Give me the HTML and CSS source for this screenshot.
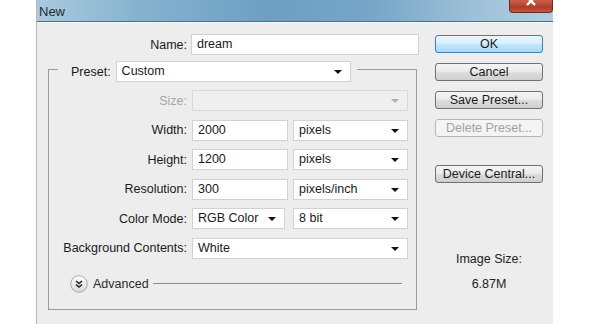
FILE: index.html
```html
<!DOCTYPE html>
<html lang="en">
  <head>
    <meta charset="UTF-8" />
    <title>New</title>
    <link rel="stylesheet" href="styles.css">
  </head>
  <body>
    <div class="dialog">
      <div class="titlebar">
        <span class="title">New</span>
        <span class="close">
          <svg width="14" height="10" viewBox="0 0 14 10">
            <path d="M3 -3 L11 5 M11 -3 L3 5" stroke="#ffffff" stroke-width="2.4" fill="none" />
          </svg>
        </span>
      </div>

      <div class="content">
        <div class="main">
          <div class="name-row">
            <label class="label">Name:</label>
            <div class="field name-field">dream</div>
          </div>

          <fieldset class="group">
            <legend class="legend">
              <span class="legend-label">Preset:</span>
              <span class="field select preset-select">Custom</span>
            </legend>

            <div class="rows">
              <span class="label disabled">Size:</span>
              <span class="field select wide disabled-field"></span>

              <span class="label">Width:</span>
              <div class="pair">
                <span class="field num">2000</span>
                <span class="field select unit">pixels</span>
              </div>

              <span class="label">Height:</span>
              <div class="pair">
                <span class="field num">1200</span>
                <span class="field select unit">pixels</span>
              </div>

              <span class="label">Resolution:</span>
              <div class="pair">
                <span class="field num">300</span>
                <span class="field select unit">pixels/inch</span>
              </div>

              <span class="label">Color Mode:</span>
              <div class="pair">
                <span class="field select mode">RGB Color</span>
                <span class="field select unit">8 bit</span>
              </div>

              <span class="label">Background Contents:</span>
              <span class="field select wide">White</span>
            </div>

            <div class="advanced">
              <svg class="adv-icon" width="18" height="18" viewBox="0 0 18 18">
                <defs>
                  <linearGradient id="advg" x1="0" y1="0" x2="0" y2="1">
                    <stop offset="0" stop-color="#ffffff" />
                    <stop offset="1" stop-color="#d8d8d8" />
                  </linearGradient>
                </defs>
                <circle cx="9" cy="9" r="8.3" fill="url(#advg)" stroke="#a8a8a8" stroke-width="1" />
                <path d="M6 6 L9 8.5 L12 6 M6 9.5 L9 12 L12 9.5" fill="none" stroke="#222" stroke-width="1.6" />
              </svg>
              <span class="adv-text">Advanced</span>
              <span class="adv-line"></span>
            </div>
          </fieldset>
        </div>

        <div class="side">
          <button class="btn default">OK</button>
          <button class="btn">Cancel</button>
          <button class="btn">Save Preset...</button>
          <button class="btn" disabled>Delete Preset...</button>
          <button class="btn device">Device Central...</button>

          <div class="image-size">
            <div>Image Size:</div>
            <div class="size-value">6.87M</div>
          </div>
        </div>
      </div>
    </div>
  </body>
</html>
```

FILE: styles.css
```css
* {
  margin: 0;
  padding: 0;
  box-sizing: border-box;
}

body {
  background-color: #ffffff;
  font-family: "Liberation Sans", Arial, sans-serif;
  font-size: 12.5px;
  color: #1a1a1a;
}

.dialog {
  margin-left: 36px;
  width: 517px;
  height: 324px;
  background-color: #ededed;
  border-left: 1px solid #b8b8b8;
  overflow: hidden;
}

/* Title bar */
.titlebar {
  height: 22px;
  display: flex;
  justify-content: space-between;
  align-items: flex-start;
  background: linear-gradient(90deg, #a9cade 0%, #86b2cf 20%, #6d9fc3 45%, #77a6c7 65%, #9fc1d8 85%, #b2cde0 100%);
  border-bottom: 1px solid #4d6f86;
}

.title {
  padding: 4px 0 0 2px;
  font-size: 13px;
  color: #1b2a33;
}

.close {
  display: flex;
  justify-content: center;
  width: 44px;
  height: 13px;
  background: linear-gradient(180deg, #c8604c 0%, #b33b26 60%, #c9563d 100%);
  border: 1px solid #6b2b20;
  border-top: none;
  border-radius: 0 0 4px 4px;
}

/* Body */
.content {
  display: flex;
  border-top: 1px solid #f8f8f8;
}

.main {
  width: 381px;
  padding-left: 11px;
}

.label {
  text-align: right;
  color: #1a1a1a;
  white-space: nowrap;
}

.label.disabled {
  color: #a6a6a6;
}

.name-row {
  display: grid;
  grid-template-columns: 139px 228px;
  column-gap: 4px;
  align-items: center;
  margin-top: 11px;
}

.field {
  height: 21px;
  line-height: 19px;
  padding-left: 5px;
  background-color: #ffffff;
  border: 1px solid #d2d2d2;
  white-space: nowrap;
}

.select {
  position: relative;
}

/* small dropdown triangle */
.select::after {
  content: "";
  position: absolute;
  right: 8px;
  top: 8px;
  border-left: 4px solid transparent;
  border-right: 4px solid transparent;
  border-top: 4px solid #111111;
}

.disabled-field {
  background-color: #efefef;
  border-color: #d8d8d8;
}

.disabled-field::after {
  border-top-color: #b0b0b0;
}

/* Preset group */
.group {
  width: 369px;
  height: 253px;
  margin-top: 2px;
  border: 1px solid #9a9a9a;
  padding: 0;
}

.legend {
  display: flex;
  align-items: center;
  margin-left: 9px;
  padding: 4px 6px 0 4px;
  gap: 5px;
}

.legend-label {
  padding-left: 9px;
}

.preset-select {
  width: 235px;
}

.rows {
  display: grid;
  grid-template-columns: 138px 216px;
  column-gap: 5px;
  row-gap: 8.6px;
  align-items: center;
  margin-top: 8px;
}

.pair {
  display: flex;
  justify-content: space-between;
}

.num {
  width: 96px;
}

.unit {
  width: 115px;
}

.mode {
  width: 93px;
}

/* Advanced toggle */
.advanced {
  display: flex;
  align-items: center;
  margin-top: 16px;
  margin-left: 21px;
}

.adv-icon {
  flex: none;
}

.adv-text {
  margin-left: 5px;
  color: #2a2a2a;
}

.adv-line {
  width: 249px;
  margin-left: 4px;
  border-top: 1px solid #8c8c8c;
}

/* Buttons column */
.side {
  display: flex;
  flex-direction: column;
  width: 108px;
  margin-left: 17px;
  padding-top: 12px;
}

.btn {
  height: 18px;
  margin-bottom: 10px;
  font-family: inherit;
  font-size: 12.5px;
  color: #1a1a1a;
  background: linear-gradient(180deg, #f4f4f4 0%, #ececec 45%, #dcdcdc 55%, #cfcfcf 100%);
  border: 1px solid #707070;
  border-radius: 3px;
}

.btn.default {
  border-color: #3c7fb1;
  background: linear-gradient(180deg, #eaf6fd 0%, #d9f0fc 45%, #bee6fd 55%, #a7d9f5 100%);
}

.btn:disabled {
  color: #a2a2a2;
  border-color: #b5b5b5;
  background: #f4f4f4;
}

.btn.device {
  margin-top: 18px;
}

.image-size {
  margin-top: 54px;
  text-align: center;
  line-height: 25px;
  color: #222222;
}
```
